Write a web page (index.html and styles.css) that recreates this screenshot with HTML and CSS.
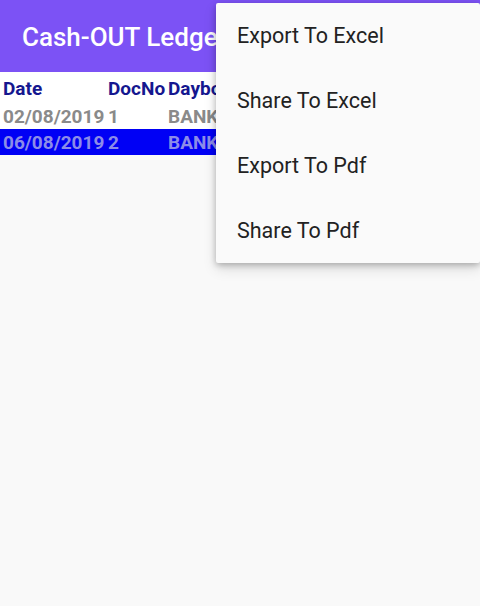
FILE: index.html
```html
<!DOCTYPE html>
<html lang="en">
<head>
<meta charset="UTF-8">
<meta name="viewport" content="width=device-width, initial-scale=1.0">
<title>Cash-OUT Ledger</title>
<link rel="stylesheet" href="styles.css">
</head>
<body>
<div class="app">
  <div class="app-bar">
    <span class="app-title">Cash-OUT Ledger</span>
  </div>
  <div class="ledger">
    <div class="ledger-row ledger-head">
      <span class="col-date">Date</span>
      <span class="col-doc">DocNo</span>
      <span class="col-day">Daybook</span>
    </div>
    <div class="ledger-row">
      <span class="col-date">02/08/2019</span>
      <span class="col-doc">1</span>
      <span class="col-day">BANK</span>
    </div>
    <div class="ledger-row selected">
      <span class="col-date">06/08/2019</span>
      <span class="col-doc">2</span>
      <span class="col-day">BANK</span>
    </div>
  </div>

  <div class="popup-menu">
    <div class="menu-item">Export To Excel</div>
    <div class="menu-item">Share To Excel</div>
    <div class="menu-item">Export To Pdf</div>
    <div class="menu-item">Share To Pdf</div>
  </div>
</div>
</body>
</html>
```

FILE: styles.css
```css
body {
  margin: 0;
  font-family: Roboto, "Noto Sans", sans-serif;
  background-color: #f9f9f9;
}

.app {
  position: relative;
  width: 480px;
  height: 606px;
  overflow: hidden;
}

.app-bar {
  height: 72px;
  background-color: #7c52f5;
  display: flex;
  align-items: center;
  padding-left: 22px;
}

.app-title {
  color: #fff;
  font-size: 26px;
  font-weight: 500;
  margin-top: 2px;
}

.ledger {
  background-color: #fff;
}

.ledger-row {
  display: flex;
  height: 26px;
  align-items: center;
  font-size: 19px;
  font-weight: bold;
  color: #8a8a8a;
  padding-left: 3px;
}

.ledger-head {
  color: #15178f;
  height: 30px;
  padding-top: 1px;
}

.selected {
  background-color: #0000f5;
  color: #8c8ce8;
}

.col-date {
  width: 105px;
}

.col-doc {
  width: 60px;
}

.col-day {
  white-space: nowrap;
}

.popup-menu {
  position: absolute;
  top: 3px;
  left: 216px;
  width: 264px;
  background-color: #fafafa;
  box-shadow: 0 2px 6px rgba(0, 0, 0, 0.25), 0 6px 14px rgba(0, 0, 0, 0.12);
  border-radius: 2px;
}

.menu-item {
  height: 65px;
  line-height: 65px;
  padding-left: 21px;
  font-size: 21.5px;
  color: #222;
}
```
